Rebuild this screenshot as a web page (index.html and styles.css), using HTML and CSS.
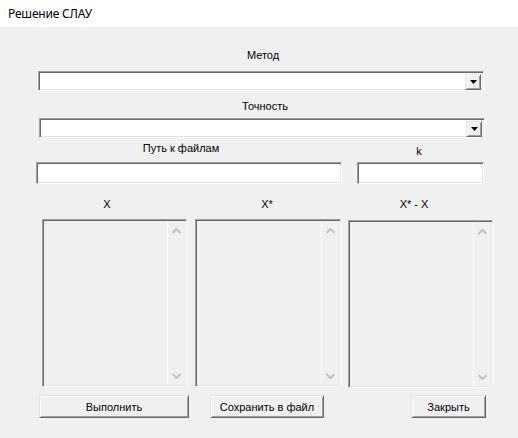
FILE: index.html
```html
<!DOCTYPE html>
<html lang="ru">
<head>
    <meta charset="UTF-8">
    <title>Решение СЛАУ</title>
    <link rel="stylesheet" href="styles.css">
</head>
<body>
    <div class="titlebar">Решение СЛАУ</div>

    <div class="form">
        <div class="label label-method">Метод</div>
        <div class="combo combo-method">
            <span class="combo-btn"><svg width="7" height="4" viewBox="0 0 7 4"><path d="M0 0H7L3.5 4Z" fill="#000"/></svg></span>
        </div>

        <div class="label label-eps">Точность</div>
        <div class="combo combo-eps">
            <span class="combo-btn"><svg width="7" height="4" viewBox="0 0 7 4"><path d="M0 0H7L3.5 4Z" fill="#000"/></svg></span>
        </div>

        <div class="row path-labels">
            <div class="label label-path">Путь к файлам</div>
            <div class="label label-k">k</div>
        </div>
        <div class="row inputs">
            <div class="textbox textbox-path"></div>
            <div class="textbox textbox-k"></div>
        </div>

        <div class="row list-labels">
            <div class="label label-x">X</div>
            <div class="label label-xs">X*</div>
            <div class="label label-diff">X* - X</div>
        </div>
        <div class="row lists">
            <div class="listbox list-x">
                <div class="scroll">
                    <svg width="9" height="6" viewBox="0 0 9 6"><path d="M0.5 5L4.5 1L8.5 5" fill="none" stroke="#c2c2c2" stroke-width="2"/></svg>
                    <svg width="9" height="6" viewBox="0 0 9 6"><path d="M0.5 1L4.5 5L8.5 1" fill="none" stroke="#c2c2c2" stroke-width="2"/></svg>
                </div>
            </div>
            <div class="listbox list-xs">
                <div class="scroll">
                    <svg width="9" height="6" viewBox="0 0 9 6"><path d="M0.5 5L4.5 1L8.5 5" fill="none" stroke="#c2c2c2" stroke-width="2"/></svg>
                    <svg width="9" height="6" viewBox="0 0 9 6"><path d="M0.5 1L4.5 5L8.5 1" fill="none" stroke="#c2c2c2" stroke-width="2"/></svg>
                </div>
            </div>
            <div class="listbox list-diff">
                <div class="scroll">
                    <svg width="9" height="6" viewBox="0 0 9 6"><path d="M0.5 5L4.5 1L8.5 5" fill="none" stroke="#c2c2c2" stroke-width="2"/></svg>
                    <svg width="9" height="6" viewBox="0 0 9 6"><path d="M0.5 1L4.5 5L8.5 1" fill="none" stroke="#c2c2c2" stroke-width="2"/></svg>
                </div>
            </div>
        </div>

        <div class="row buttons">
            <button class="button btn-run">Выполнить</button>
            <button class="button btn-save">Сохранить в файл</button>
            <button class="button btn-close">Закрыть</button>
        </div>
    </div>
</body>
</html>
```

FILE: styles.css
```css
body {
    margin: 0;
    background: #f0f0f0;
    font-family: "Liberation Sans", Arial, sans-serif;
    font-size: 11px;
    color: #000;
}
.titlebar {
    height: 27px;
    line-height: 27px;
    background: #fff;
    padding-left: 8px;
    font-family: "Noto Sans", "Liberation Sans", sans-serif;
    font-size: 12px;
    letter-spacing: -0.2px;
}
.label {
    height: 14px;
    line-height: 14px;
    text-align: center;
    color: #000;
}
.row {
    display: flex;
}

/* combos */
.label-method {
    margin: 21px 0 0 38px;
    width: 450px;
}
.label-eps {
    margin: 8px 0 0 39px;
    width: 452px;
}
.combo {
    box-sizing: border-box;
    height: 20px;
    width: 446px;
    background: #fff;
    border: 1px solid;
    border-color: #a0a0a0 #fff #fff #a0a0a0;
    box-shadow: inset 1px 1px 0 #696969, inset -1px -1px 0 #e3e3e3;
    display: flex;
    justify-content: flex-end;
    padding: 2px;
}
.combo-method {
    margin: 9px 0 0 38px;
}
.combo-eps {
    margin: 5px 0 0 39px;
}
.combo-btn {
    box-sizing: border-box;
    width: 16px;
    height: 16px;
    background: #f0f0f0;
    border: 1px solid;
    border-color: #e3e3e3 #696969 #696969 #e3e3e3;
    box-shadow: inset 1px 1px 0 #fff, inset -1px -1px 0 #a0a0a0;
    display: flex;
    align-items: center;
    justify-content: center;
}

/* path + k */
.path-labels {
    margin-top: 3px;
    height: 21px;
}
.label-path {
    margin-left: 36px;
    width: 290px;
}
.label-k {
    margin-left: 31px;
    width: 124px;
    padding-top: 3px;
}
.textbox {
    box-sizing: border-box;
    height: 22px;
    background: #fff;
    border: 1px solid;
    border-color: #a0a0a0 #fff #fff #a0a0a0;
    box-shadow: inset 1px 1px 0 #696969, inset -1px -1px 0 #e3e3e3;
}
.textbox-path {
    margin-left: 36px;
    width: 306px;
}
.textbox-k {
    margin-left: 15px;
    width: 127px;
}

/* lists */
.list-labels {
    margin-top: 13px;
    height: 14px;
}
.label-x {
    margin-left: 42px;
    width: 130px;
}
.label-xs {
    margin-left: 23px;
    width: 144px;
}
.label-diff {
    margin-left: 9px;
    width: 132px;
}
.lists {
    margin-top: 8px;
    align-items: flex-start;
}
.listbox {
    box-sizing: border-box;
    height: 168px;
    width: 145px;
    background: #f0f0f0;
    border: 1px solid;
    border-color: #a0a0a0 #fff #fff #a0a0a0;
    box-shadow: inset 1px 1px 0 #696969, inset -1px -1px 0 #e3e3e3;
    display: flex;
    justify-content: flex-end;
    padding: 2px 2px 2px 2px;
}
.list-x {
    margin-left: 42px;
}
.list-xs {
    margin-left: 8px;
    width: 146px;
}
.list-diff {
    margin-left: 7px;
    margin-top: 1px;
}
.scroll {
    box-sizing: border-box;
    width: 17px;
    border-left: 1px solid #fff;
    display: flex;
    flex-direction: column;
    justify-content: space-between;
    align-items: center;
    padding: 6px 0 5px;
}

/* buttons */
.buttons {
    margin-top: 7px;
}
.button {
    box-sizing: border-box;
    height: 23px;
    background: #f0f0f0;
    border: 1px solid;
    border-color: #e3e3e3 #696969 #696969 #e3e3e3;
    box-shadow: inset 1px 1px 0 #fff, inset -1px -1px 0 #a0a0a0;
    font-family: "Liberation Sans", Arial, sans-serif;
    font-size: 11px;
    color: #000;
    padding: 0;
}
.btn-run {
    margin-left: 39px;
    width: 150px;
}
.btn-save {
    margin-left: 21px;
    width: 114px;
}
.btn-close {
    margin-left: 87px;
    width: 75px;
}
```
